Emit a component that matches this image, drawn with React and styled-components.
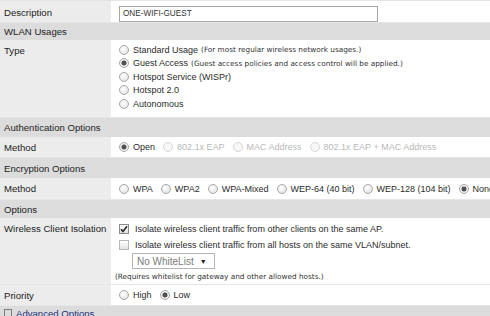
import React from "react"
import styled, { createGlobalStyle } from "styled-components"

const Font = `"Liberation Sans", Arial, sans-serif`

const GlobalStyle = createGlobalStyle`
  html, body {
    margin: 0;
    padding: 0;
    background: #ffffff;
    overflow: hidden;
  }
  body {
    font-family: ${Font};
    color: #222;
  }
`

const Page = styled.div`
  width: 490px;
  height: 316px;
  overflow: hidden;
  border-top: 1px solid #e4e4e4;
  box-sizing: border-box;
`

const Row = styled.div`
  display: grid;
  grid-template-columns: 111px 1fr;
  height: ${(p) => p.$h}px;
  border-bottom: 1px solid #e6e6e6;
  box-sizing: border-box;
  overflow: hidden;
`

const Label = styled.div`
  background: #ececec;
  font-size: 9.6px;
  line-height: 14px;
  padding: ${(p) => p.$top ?? 4}px 0 0 4px;
  white-space: nowrap;
`

const Value = styled.div`
  background: #ffffff;
  padding: ${(p) => p.$top ?? 3}px 0 0 8px;
  display: flex;
  flex-direction: ${(p) => (p.$col ? "column" : "row")};
  align-items: ${(p) => (p.$col ? "flex-start" : "center")};
  white-space: nowrap;
`

const Header = styled.div`
  background: #dcdcdc;
  height: ${(p) => p.$h}px;
  display: flex;
  align-items: center;
  padding-left: 4px;
  font-size: 9.6px;
  color: #222;
`

const TextInput = styled.div`
  width: 259px;
  height: 16px;
  border: 1px solid #a6a6a6;
  box-sizing: border-box;
  font-size: 8.2px;
  line-height: 14px;
  padding-left: 3px;
  color: #333;
`

const Option = styled.label`
  display: flex;
  align-items: center;
  height: ${(p) => p.$h || 13.5}px;
  margin-right: ${(p) => p.$gap ?? 7}px;
  font-size: 9px;
  color: ${(p) => (p.$disabled ? "#b9b9b9" : "#2b2b2b")};
`

const Radio = styled.span`
  width: 10px;
  height: 10px;
  border-radius: 50%;
  box-sizing: border-box;
  margin-right: 4px;
  border: 1px solid ${(p) => (p.$disabled ? "#d6d6d6" : "#a9a9a9")};
  background: ${(p) =>
    p.$checked
      ? "radial-gradient(circle, #505050 0 2.2px, #e9e9e9 2.8px, #f6f6f6 100%)"
      : p.$disabled
      ? "#f7f7f7"
      : "radial-gradient(circle at 40% 35%, #ffffff, #dcdcdc)"};
  flex: none;
`

const Check = styled.span`
  width: 10px;
  height: 10px;
  border: 1px solid ${(p) => (p.$checked ? "#8a8a8a" : "#b8b8b8")};
  box-sizing: border-box;
  margin-right: 6px;
  background: linear-gradient(#ffffff, #e2e2e2);
  display: flex;
  align-items: center;
  justify-content: center;
  flex: none;
`

const Note = styled.span`
  font-family: "DejaVu Sans", Verdana, sans-serif;
  font-size: 7.3px;
  margin-left: 3px;
  color: #333;
`

const Select = styled.div`
  width: 83px;
  height: 16px;
  margin: 0 0 0 13px;
  border: 1px solid #b5b5b5;
  box-sizing: border-box;
  display: flex;
  align-items: center;
  padding-left: 4px;
  font-size: 10px;
  color: #7a7a7a;
  gap: 6px;
`

const Arrow = styled.span`
  font-size: 7px;
  color: #222;
`

const SmallLine = styled.div`
  font-family: "DejaVu Sans", Verdana, sans-serif;
  font-size: 7.3px;
  line-height: 9px;
  margin: 3px 0 0 -4px;
  color: #333;
`

const Advanced = styled.div`
  background: #dcdcdc;
  height: 12px;
  display: flex;
  align-items: center;
  padding: 1px 0 0 4px;
  font-size: 9.6px;
  color: #1f2d7a;
  gap: 4px;
`

const PlusBox = styled.span`
  width: 6px;
  height: 6px;
  border: 1px solid #7a7a7a;
  flex: none;
`

const RadioOption = ({ children, checked, disabled, gap }) => (
  <Option $disabled={disabled} $gap={gap} $h={20}>
    <Radio $checked={checked} $disabled={disabled} />
    {children}
  </Option>
)

const typeOptions = [
  { label: "Standard Usage", note: "(For most regular wireless network usages.)" },
  { label: "Guest Access", note: "(Guest access policies and access control will be applied.)", checked: true },
  { label: "Hotspot Service (WISPr)" },
  { label: "Hotspot 2.0" },
  { label: "Autonomous" },
]

const authOptions = [
  { label: "Open", checked: true },
  { label: "802.1x EAP", disabled: true },
  { label: "MAC Address", disabled: true },
  { label: "802.1x EAP + MAC Address", disabled: true },
]

const encOptions = [
  { label: "WPA" },
  { label: "WPA2" },
  { label: "WPA-Mixed" },
  { label: "WEP-64 (40 bit)" },
  { label: "WEP-128 (104 bit)" },
  { label: "None", checked: true },
]

export default function App() {
  return (
    <>
      <GlobalStyle />
      <Page>
        <Row $h={22}>
          <Label $top={5}>Description</Label>
          <Value $top={4}>
            <TextInput>ONE-WIFI-GUEST</TextInput>
          </Value>
        </Row>

        <Header $h={17}>WLAN Usages</Header>
        <Row $h={78}>
          <Label>Type</Label>
          <Value $col $top={3}>
            {typeOptions.map((o) => (
              <Option key={o.label}>
                <Radio $checked={o.checked} />
                {o.label}
                {o.note && <Note>{o.note}</Note>}
              </Option>
            ))}
          </Value>
        </Row>

        <Header $h={19}>Authentication Options</Header>
        <Row $h={21}>
          <Label>Method</Label>
          <Value $top={0}>
            {authOptions.map((o) => (
              <RadioOption key={o.label} checked={o.checked} disabled={o.disabled} gap={8}>
                {o.label}
              </RadioOption>
            ))}
          </Value>
        </Row>

        <Header $h={20}>Encryption Options</Header>
        <Row $h={22}>
          <Label>Method</Label>
          <Value $top={0}>
            {encOptions.map((o) => (
              <RadioOption key={o.label} checked={o.checked} gap={8}>
                {o.label}
              </RadioOption>
            ))}
          </Value>
        </Row>

        <Header $h={18}>Options</Header>
        <Row $h={67}>
          <Label $top={4}>Wireless Client Isolation</Label>
          <Value $col $top={3}>
            <Option $h={16}>
              <Check $checked>
                <svg width="8" height="8" viewBox="0 0 8 8">
                  <path d="M1 4.2 L3 6.4 L7 1.2" fill="none" stroke="#2a2a2a" strokeWidth="1.6" />
                </svg>
              </Check>
              Isolate wireless client traffic from other clients on the same AP.
            </Option>
            <Option $h={16}>
              <Check />
              Isolate wireless client traffic from all hosts on the same VLAN/subnet.
            </Option>
            <Select>
              No WhiteList <Arrow>▼</Arrow>
            </Select>
            <SmallLine>(Requires whitelist for gateway and other allowed hosts.)</SmallLine>
          </Value>
        </Row>

        <Row $h={21}>
          <Label>Priority</Label>
          <Value $top={0}>
            <RadioOption gap={8}>High</RadioOption>
            <RadioOption checked>Low</RadioOption>
          </Value>
        </Row>

        <Advanced>
          <PlusBox />
          Advanced Options
        </Advanced>
      </Page>
    </>
  )
}
